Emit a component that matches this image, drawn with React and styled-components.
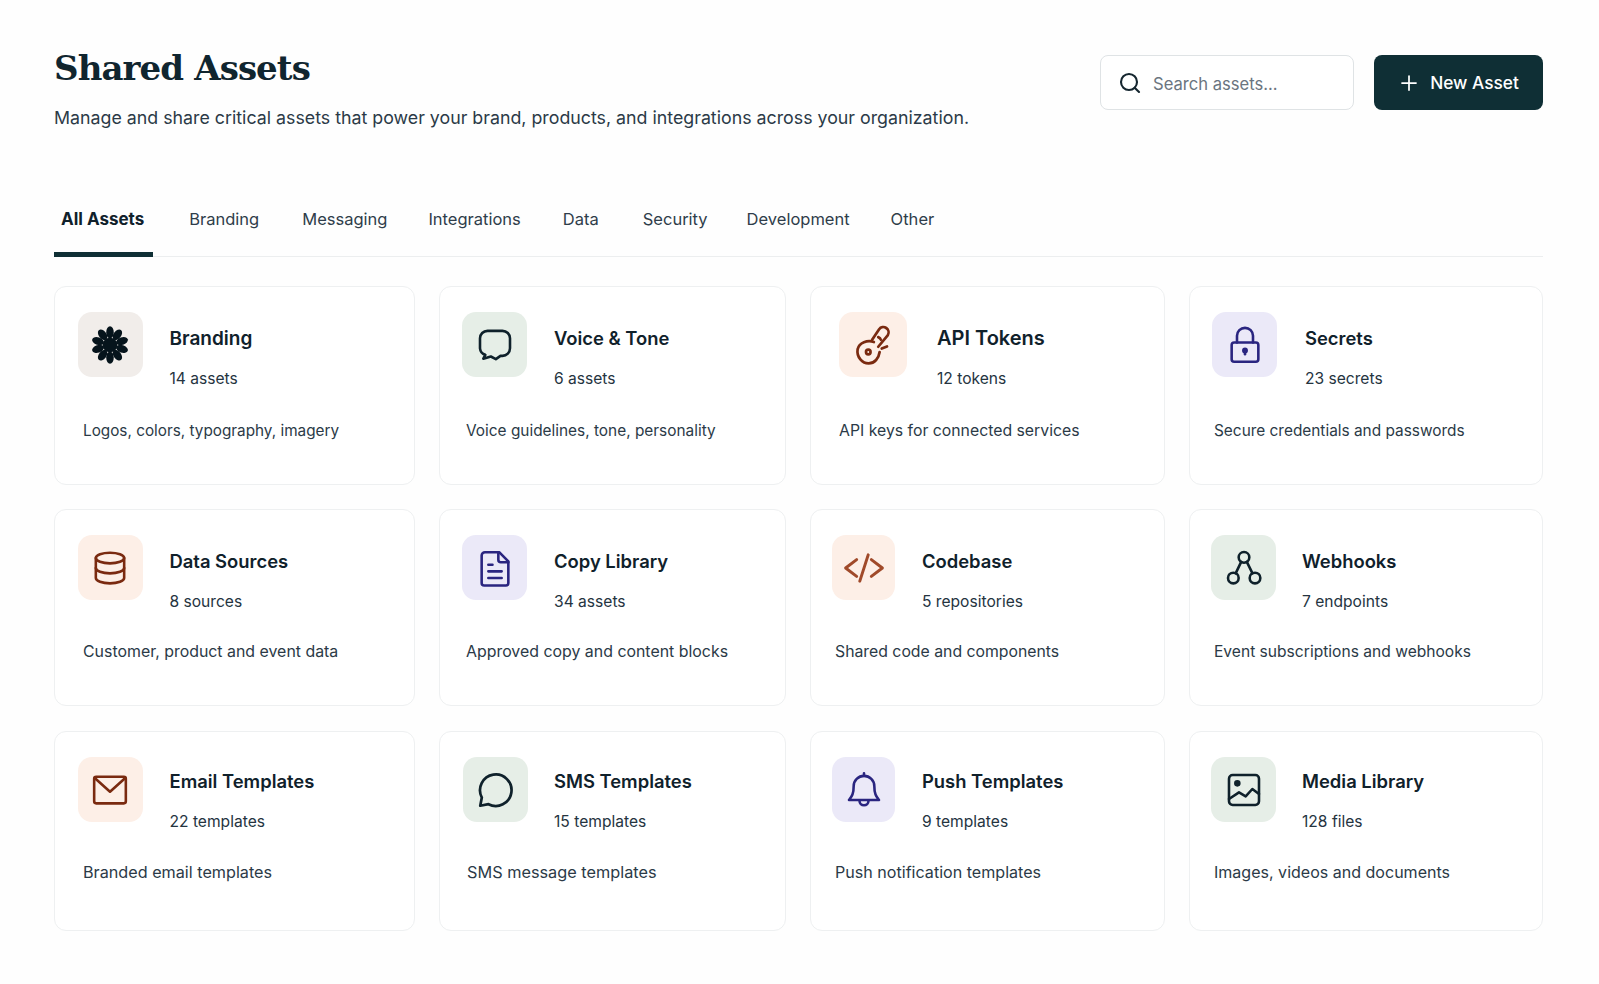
import React from 'react'
import styled, { createGlobalStyle } from 'styled-components'
import { Search, Plus } from 'lucide-react'

const GlobalStyle = createGlobalStyle`
  html, body {
    margin: 0;
    background: #fefefe;
    font-family: Inter, "Noto Sans", sans-serif;
    color: #12232d;
  }
  * { box-sizing: border-box; }
`

const Page = styled.div`
  width: 1599px;
  height: 984px;
  overflow: hidden;
  padding: 44px 56px 0 54px;
`

const Header = styled.header`
  display: flex;
  justify-content: space-between;
  align-items: flex-start;
`

const Title = styled.h1`
  margin: 0;
  font-family: "DejaVu Serif", serif;
  font-size: 34px;
  line-height: 48px;
  font-weight: 700;
  letter-spacing: -0.9px;
  color: #10252f;
`

const Subtitle = styled.p`
  margin: 13px 0 0;
  font-size: 17.8px;
  line-height: 26px;
  color: #2b3a47;
`

const Actions = styled.div`
  display: flex;
  gap: 20px;
  margin-top: 11px;
`

const SearchBox = styled.div`
  width: 254px;
  height: 55px;
  display: flex;
  align-items: center;
  gap: 11px;
  padding: 2px 0 0 17px;
  border: 1px solid #dfe3e5;
  border-radius: 8px;
  background: #fff;
  font-size: 16.6px;
  color: #6b7580;
  svg { color: #15262f; margin-top: -2px; }
`

const NewButton = styled.button`
  width: 169px;
  height: 55px;
  display: flex;
  align-items: center;
  justify-content: center;
  gap: 9px;
  padding: 0 1px 0 0;
  border: 0;
  border-radius: 8px;
  background: #0f2f35;
  color: #fff;
  font: 500 17.3px Inter, sans-serif;
`

const Tabs = styled.nav`
  display: flex;
  height: 60px;
  margin-top: 66px;
  border-bottom: 1px solid #eceeef;
`

const Tab = styled.a`
  height: 60px;
  padding: 12px ${p => (p.$active ? 9 : 7)}px 0 7px;
  margin-right: ${p => p.$gap}px;
  line-height: 20px;
  font-size: ${p => (p.$active ? 17 : 16.5)}px;
  font-weight: ${p => (p.$active ? 700 : 400)};
  color: ${p => (p.$active ? '#10212b' : '#2f3d4a')};
  border-bottom: ${p => (p.$active ? '5px solid #0f2f35' : '0')};
`

const Grid = styled.section`
  display: grid;
  grid-template-columns: 361px 347px 355px 354px;
  grid-template-rows: 198.5px 197px 199.5px;
  column-gap: 24px;
  row-gap: 24.75px;
  margin-top: 29px;
`

const Card = styled.article`
  border: 1px solid #eef0f1;
  border-radius: 12px;
  background: #fff;
  padding: 25px 0 0 ${p => p.$left}px;
`

const CardTop = styled.div`
  display: flex;
  gap: ${p => p.$gap}px;
`

const Tile = styled.div`
  flex: none;
  width: ${p => p.$width || 65}px;
  height: 65px;
  display: flex;
  align-items: center;
  justify-content: center;
  border-radius: 14px;
  background: ${p => p.$bg};
  color: ${p => p.$fg};
`

const CardInfo = styled.div`
  padding-top: ${p => p.$top}px;
`

const CardTitle = styled.h2`
  margin: 0;
  font-size: ${p => p.$size || 18.4}px;
  line-height: 25px;
  font-weight: 600;
  color: #10212b;
`

const CardCount = styled.div`
  margin-top: ${p => p.$gap}px;
  font-size: 15.6px;
  line-height: 24px;
  color: #25343f;
`

const CardDesc = styled.p`
  margin: ${p => p.$gap}px 0 0 ${p => p.$inset}px;
  font-size: ${p => p.$size}px;
  line-height: 24px;
  color: #2b3a47;
`

const Glyph = ({ children, size = 40, weight = 1.55 }) => (
  <svg width={size} height={size} viewBox='0 0 24 24' fill='none' stroke='currentColor' strokeWidth={weight} strokeLinecap='round' strokeLinejoin='round'>
    {children}
  </svg>
)

const FlowerIcon = () => (
  <svg width='42' height='42' viewBox='0 0 40 40' fill='currentColor'>
    {[0, 36, 72, 108, 144, 180, 216, 252, 288, 324].map(a => (
      <ellipse key={a} cx='20' cy='8' rx='3.600' ry='5.800' transform={`rotate(${a} 20 20)`} />
    ))}
    <circle cx='20' cy='20' r='7' />
  </svg>
)

const ChatSquareIcon = () => (
  <Glyph>
    <path d='M7.500 3.500h9A4.500 4.500 0 0 1 21 8v6a4.500 4.500 0 0 1-4.500 4.500h-1.200l-2.800 2-3-1.600-4.500 1.300 1.200-2.300A4.500 4.500 0 0 1 3 14V8a4.500 4.500 0 0 1 4.500-4.500z' />
  </Glyph>
)

const LinkIcon = () => (
  <Glyph size={42}>
    <circle cx='9.300' cy='16' r='1.300' />
    <path d='M12.500 10.300C9 9 4 10.500 3.200 14.500 2.500 19 6 22.500 9.500 22.500c3.500 0 5.800-3 6.300-6.500' />
    <path d='M11.500 9L15.500 3a3 3 0 0 1 5 3.300L15 13' />
    <path d='M15 7.500c.8.300 1.300.8 1.500 1.500M20 12.800l-3 1.200' />
  </Glyph>
)

const LockIcon = () => (
  <Glyph>
    <rect x='4' y='10.500' width='16' height='11.500' rx='1.500' />
    <path d='M7.200 10.500V6.500a4.800 4.800 0 0 1 9.600 0v4' />
    <circle cx='12' cy='15.300' r='1' fill='currentColor' />
    <path d='M12 15.500v2' />
  </Glyph>
)

const DatabaseIcon = () => (
  <Glyph>
    <ellipse cx='12' cy='6' rx='8.500' ry='3.200' />
    <path d='M3.500 6v12c0 1.800 3.800 3.200 8.500 3.200s8.500-1.400 8.500-3.200V6' />
    <path d='M3.500 12c0 1.800 3.800 3.200 8.500 3.200s8.500-1.400 8.500-3.200' />
  </Glyph>
)

const FileIcon = () => (
  <Glyph>
    <path d='M6 2.500h8.500L20 8v13a1.500 1.500 0 0 1-1.500 1.500h-13A1.500 1.500 0 0 1 4 21V4.500a2 2 0 0 1 2-2z' />
    <path d='M14 2.500V7a1.500 1.500 0 0 0 1.500 1.500H20' />
    <path d='M8 10h2.500M8 14h8M8 18h8' />
  </Glyph>
)

const CodeIcon = () => (
  <Glyph size={42} weight={1.7}>
    <path d='M7.800 7.200L1.500 12l6.300 4.800M16.200 7.200L22.500 12l-6.300 4.800M14.400 4.500l-4.800 15' />
  </Glyph>
)

const NodesIcon = () => (
  <Glyph>
    <circle cx='12' cy='5.600' r='3.200' />
    <circle cx='5.600' cy='18' r='3.200' />
    <circle cx='18.600' cy='18' r='3.200' />
    <path d='M10.300 8.300L7 15.200M13.700 8.300l3.400 6.900' />
  </Glyph>
)

const MailIcon = () => (
  <Glyph>
    <rect x='2.500' y='4' width='19' height='16' rx='1.200' />
    <path d='M3 5l9 8 9-8' />
  </Glyph>
)

const BubbleIcon = () => (
  <Glyph size={42}>
    <path d='M7.700 20.100A9 9 0 1 0 3.900 16.300L3 21z' />
  </Glyph>
)

const BellIcon = () => (
  <Glyph>
    <path d='M12 3.500a6.200 6.200 0 0 1 6.200 6.200c0 5 1.300 6.300 2.800 8.300H3c1.500-2 2.800-3.300 2.800-8.300A6.200 6.200 0 0 1 12 3.500z' />
    <path d='M12 2v1.500M9.300 18.500a2.700 2.700 0 0 0 5.400 0' />
  </Glyph>
)

const ImageIcon = () => (
  <Glyph>
    <rect x='3' y='3' width='18' height='18' rx='2.200' />
    <circle cx='8' cy='8' r='1.200' fill='currentColor' />
    <path d='M3 17.400l6-4 4 2.400 4-4.400 4 3' />
  </Glyph>
)

const BEIGE = '#f1edea'
const GREEN = '#e6eee7'
const PEACH = '#fdefe7'
const LILAC = '#ebe9f8'
const INK = '#0f212b'
const RUST = '#7a2a10'
const NAVY = '#2a2580'

const tabs = [
  { label: 'All Assets', gap: 29, active: true },
  { label: 'Branding', gap: 29 },
  { label: 'Messaging', gap: 27 },
  { label: 'Integrations', gap: 28 },
  { label: 'Data', gap: 30 },
  { label: 'Security', gap: 25 },
  { label: 'Development', gap: 27 },
  { label: 'Other', gap: 0 },
]

// vertical rhythm differs slightly from row to row
const rows = [
  { infoTop: 14, countGap: 16, descGap: 28 },
  { infoTop: 14, countGap: 16, descGap: 26 },
  { infoTop: 12, countGap: 16, descGap: 26 },
]

const cards = [
  { title: 'Branding', titleSize: 19, count: '14 assets', desc: 'Logos, colors, typography, imagery', descSize: 15.3, Icon: FlowerIcon, bg: BEIGE, fg: '#06141c', left: 22.5, gap: 27, inset: 5.5 },
  { title: 'Voice & Tone', count: '6 assets', desc: 'Voice guidelines, tone, personality', descSize: 15.4, Icon: ChatSquareIcon, bg: GREEN, fg: INK, left: 22, gap: 27, inset: 4 },
  { title: 'API Tokens', titleSize: 20, count: '12 tokens', desc: 'API keys for connected services', descSize: 15.8, Icon: LinkIcon, bg: PEACH, fg: RUST, left: 28, gap: 30, inset: 0, width: 68 },
  { title: 'Secrets', count: '23 secrets', desc: 'Secure credentials and passwords', descSize: 15.4, Icon: LockIcon, bg: LILAC, fg: NAVY, left: 22, gap: 28, inset: 2 },
  { title: 'Data Sources', count: '8 sources', desc: 'Customer, product and event data', descSize: 15.9, Icon: DatabaseIcon, bg: PEACH, fg: RUST, left: 22.5, gap: 27, inset: 5.5 },
  { title: 'Copy Library', count: '34 assets', desc: 'Approved copy and content blocks', descSize: 15.9, Icon: FileIcon, bg: LILAC, fg: NAVY, left: 22, gap: 27, inset: 4 },
  { title: 'Codebase', count: '5 repositories', desc: 'Shared code and components', descSize: 15.8, Icon: CodeIcon, bg: PEACH, fg: '#a04a2a', left: 21, gap: 27, inset: 3, width: 63 },
  { title: 'Webhooks', count: '7 endpoints', desc: 'Event subscriptions and webhooks', descSize: 15.6, Icon: NodesIcon, bg: GREEN, fg: INK, left: 21, gap: 26, inset: 3 },
  { title: 'Email Templates', count: '22 templates', desc: 'Branded email templates', descSize: 16.2, Icon: MailIcon, bg: PEACH, fg: RUST, left: 22.5, gap: 27, inset: 5.5 },
  { title: 'SMS Templates', count: '15 templates', desc: 'SMS message templates', descSize: 16.3, Icon: BubbleIcon, bg: GREEN, fg: INK, left: 23, gap: 26, inset: 4 },
  { title: 'Push Templates', count: '9 templates', desc: 'Push notification templates', descSize: 16.1, Icon: BellIcon, bg: LILAC, fg: NAVY, left: 21, gap: 27, inset: 3, width: 63 },
  { title: 'Media Library', count: '128 files', desc: 'Images, videos and documents', descSize: 16.05, Icon: ImageIcon, bg: GREEN, fg: INK, left: 21, gap: 26, inset: 3 },
]

function App () {
  return (
    <Page>
      <GlobalStyle />
      <Header>
        <div>
          <Title>Shared Assets</Title>
          <Subtitle>Manage and share critical assets that power your brand, products, and integrations across your organization.</Subtitle>
        </div>
        <Actions>
          <SearchBox>
            <Search size={24} strokeWidth={2.1} />
            Search assets...
          </SearchBox>
          <NewButton>
            <Plus size={24} strokeWidth={1.75} />
            New Asset
          </NewButton>
        </Actions>
      </Header>

      <Tabs>
        {tabs.map(t => (
          <Tab key={t.label} $active={t.active} $gap={t.gap}>{t.label}</Tab>
        ))}
      </Tabs>

      <Grid>
        {cards.map(({ Icon, ...c }, i) => {
          const row = rows[Math.floor(i / 4)]
          return (
            <Card key={c.title} $left={c.left}>
              <CardTop $gap={c.gap}>
                <Tile $bg={c.bg} $fg={c.fg} $width={c.width}><Icon /></Tile>
                <CardInfo $top={row.infoTop}>
                  <CardTitle $size={c.titleSize}>{c.title}</CardTitle>
                  <CardCount $gap={row.countGap}>{c.count}</CardCount>
                </CardInfo>
              </CardTop>
              <CardDesc $gap={row.descGap} $inset={c.inset} $size={c.descSize}>{c.desc}</CardDesc>
            </Card>
          )
        })}
      </Grid>
    </Page>
  )
}

export default App
